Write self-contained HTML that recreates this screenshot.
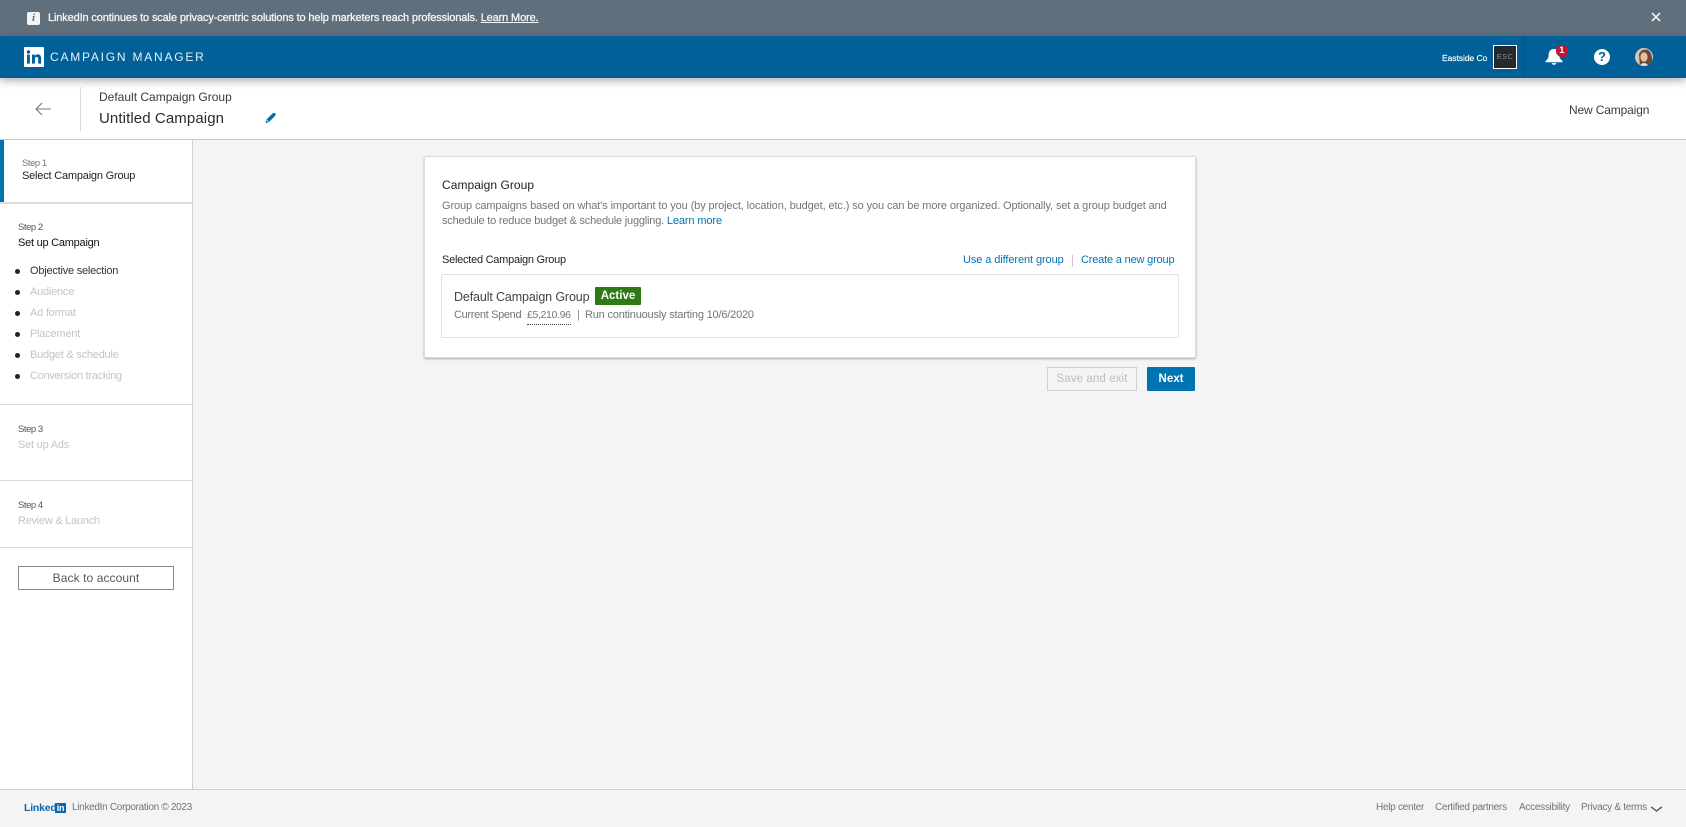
<!DOCTYPE html>
<html><head><meta charset="utf-8"><title>Campaign Manager</title>
<style>
*{box-sizing:border-box}
html,body{margin:0;padding:0;width:1686px;height:827px;overflow:hidden;background:#f4f4f4;font-family:"Liberation Sans",sans-serif}
.a{position:absolute}
.t{position:absolute;white-space:nowrap;line-height:16px;height:16px}
a{color:inherit;text-decoration:none}
.g{color:#c4c4c4}
.l{color:#0073b1}
.line{position:absolute;left:0;width:192px;height:1px;background:#dcdcdc}
.b{position:absolute;left:15px;width:5px;height:5px;border-radius:50%;background:#222}
.s{font-size:11px;letter-spacing:-.22px}
.st{font-size:9.5px;letter-spacing:-.45px}
.f{font-size:10px;color:#6f7478;letter-spacing:-.28px}
</style></head><body>
<div class="a" style="left:0;top:0;width:1686px;height:36px;background:#5f6f7c"></div>
<div class="a" style="left:27px;top:12px;width:13px;height:13px;background:#f3f3f3;border-radius:2px;color:#5f6f7c;font:italic bold 11px/13px 'Liberation Serif',serif;text-align:center">i</div>
<div class="t" style="left:48px;top:10px;font-size:11px;color:#f4f6f7;letter-spacing:-.14px;-webkit-text-stroke:.3px #f4f6f7">LinkedIn continues to scale privacy-centric solutions to help marketers reach professionals. <a href="#" style="text-decoration:underline">Learn More.</a></div>
<svg class="a" style="left:1650px;top:11px" width="12" height="12" viewBox="0 0 12 12"><path d="M2 2l8 8M10 2l-8 8" stroke="#fff" stroke-width="1.500"/></svg>

<div class="a" style="left:0;top:36px;width:1686px;height:42px;background:#006097;box-shadow:0 3px 8px rgba(0,0,0,.3);z-index:2">
<svg class="a" style="left:24px;top:11px" width="20" height="20" viewBox="0 0 20 20"><rect width="20" height="20" rx="1" fill="#fff"/><rect x="3" y="7.600" width="2.900" height="9" fill="#006097"/><circle cx="4.450" cy="5" r="1.700" fill="#006097"/><path d="M8 7.600h2.800v1.300c.5-.9 1.500-1.500 2.900-1.500 2.600 0 3.400 1.600 3.400 4.100v5.100h-2.900v-4.600c0-1.200-.3-2.100-1.500-2.100s-1.800.9-1.800 2.200v4.500H8z" fill="#006097"/></svg>
<div class="t" style="left:50px;top:13px;font-size:12px;letter-spacing:1.780px;color:#e6f0f6">CAMPAIGN MANAGER</div>
<div class="t" style="left:1442px;top:14px;font-size:8.500px;letter-spacing:-.05px;color:#fff;-webkit-text-stroke:.15px #fff">Eastside Co</div>
<div class="a" style="left:1493px;top:9px;width:24px;height:24px;border:1px solid #fff;background:#25282c;color:#8a8a8a;font-size:7.500px;line-height:22px;text-align:center;letter-spacing:.4px">ESC</div>
<div class="a" style="left:1523px;top:0;width:1px;height:42px;background:#00527f"></div>
<svg class="a" style="left:1545px;top:12px" width="18" height="18" viewBox="0 0 18 18"><path d="M9 1c3.200 0 5 2.100 5.300 5l.4 4 2.800 3.300v.9H.5v-.9l2.800-3.300.4-4C4 3.100 5.800 1 9 1z" fill="#fff"/><path d="M6.600 15.100h4.800c-.2 1-1.200 1.700-2.400 1.700s-2.200-.7-2.400-1.700z" fill="#fff"/></svg>
<div class="a" style="left:1555.500px;top:8.800px;width:12.500px;height:12.500px;border-radius:50%;background:#cb112d;color:#fff;font:bold 9.500px/12.500px 'Liberation Sans',sans-serif;text-align:center">1</div>
<div class="a" style="left:1594px;top:13px;width:16px;height:16px;border-radius:50%;background:#fff;color:#006097;font:bold 13px/16px 'Liberation Sans',sans-serif;text-align:center">?</div>
<svg class="a" style="left:1635px;top:12px" width="18" height="18" viewBox="0 0 18 18"><defs><clipPath id="c"><circle cx="9" cy="9" r="9"/></clipPath></defs><g clip-path="url(#c)"><rect width="18" height="18" fill="#cfc6ba"/><path d="M5 18L4 6Q7 0 13 2q5 3 4 16z" fill="#6a4a36"/><ellipse cx="9" cy="9" rx="3.600" ry="4.800" fill="#e6bfa4"/><path d="M4 18q5-6 10 0z" fill="#efdccd"/></g></svg>
</div>

<div class="a" style="left:0;top:78px;width:1686px;height:62px;background:#fff;border-bottom:1px solid #c8c8c8;z-index:1"></div>
<div style="position:absolute;left:0;top:0;z-index:3">
<svg class="a" style="left:34px;top:101px" width="18" height="16" viewBox="0 0 18 16"><path d="M17 8H2M8 2L2 8l6 6" fill="none" stroke="#777" stroke-width="1.100"/></svg>
<div class="a" style="left:80px;top:87px;width:1px;height:44px;background:#d9d9d9"></div>
<div class="t" style="left:99px;top:89px;font-size:12px;color:#3a3a3a">Default Campaign Group</div>
<div class="t" style="left:99px;top:111px;font-size:15px;letter-spacing:.1px;color:#2b2b2b">Untitled Campaign</div>
<svg class="a" style="left:264px;top:112px" width="13" height="12" viewBox="0 0 13 12"><path d="M8.500 1.500c.8-.8 2-.9 2.700-.2s.6 1.900-.2 2.700L5 10l-3.500 1.200L2.500 7.500z" fill="#006fa6"/><path d="M2.800 8l1.700 1.700" stroke="#fff" stroke-width=".7"/></svg>
<div class="t" style="left:1569px;top:102px;font-size:12px;letter-spacing:-.15px;color:#3c3c3c">New Campaign</div>
</div>

<div class="a" style="left:0;top:139px;width:193px;height:650px;background:#fff;border-right:1px solid #cfcfcf">
<div class="a" style="left:0;top:0;width:4px;height:63px;background:#0073b1"></div>
</div>
<div class="line" style="top:202px;height:2px"></div>
<div class="t st" style="left:22px;top:156px;color:#777">Step 1</div>
<div class="t" style="left:22px;top:168px;font-size:11px;color:#222;letter-spacing:-.2px">Select Campaign Group</div>
<div class="t st" style="left:18px;top:220px;color:#555">Step 2</div>
<div class="t" style="left:18px;top:235px;font-size:11px;color:#111;letter-spacing:-.24px">Set up Campaign</div>
<div class="b" style="top:269px"></div><div class="t s" style="left:30px;top:263px;color:#333">Objective selection</div>
<div class="b" style="top:290px"></div><div class="t g s" style="left:30px;top:284px">Audience</div>
<div class="b" style="top:311px"></div><div class="t g s" style="left:30px;top:305px">Ad format</div>
<div class="b" style="top:332px"></div><div class="t g s" style="left:30px;top:326px">Placement</div>
<div class="b" style="top:353px"></div><div class="t g s" style="left:30px;top:347px">Budget &amp; schedule</div>
<div class="b" style="top:374px"></div><div class="t g s" style="left:30px;top:368px;letter-spacing:-.28px">Conversion tracking</div>
<div class="line" style="top:404px"></div>
<div class="t st" style="left:18px;top:422px;color:#555">Step 3</div>
<div class="t g s" style="left:18px;top:437px">Set up Ads</div>
<div class="line" style="top:480px"></div>
<div class="t st" style="left:18px;top:498px;color:#555">Step 4</div>
<div class="t g s" style="left:18px;top:513px;letter-spacing:-.25px">Review &amp; Launch</div>
<div class="line" style="top:547px"></div>
<div class="a" style="left:18px;top:566px;width:156px;height:24px;border:1px solid #8a8a8a;text-align:center;font-size:12px;line-height:22px;color:#5a5a5a;letter-spacing:.09px">Back to account</div>

<div class="a" style="left:424px;top:156px;width:772px;height:202px;background:#fff;border:1px solid #dcdcdc;border-radius:2px;box-shadow:0 1px 2px rgba(0,0,0,.3)"></div>
<div class="t" style="left:442px;top:177px;font-size:12px;color:#222;letter-spacing:.05px">Campaign Group</div>
<div class="t" style="left:442px;top:198px;font-size:11px;color:#70767b;letter-spacing:-.11px">Group campaigns based on what's important to you (by project, location, budget, etc.) so you can be more organized. Optionally, set a group budget and</div>
<div class="t" style="left:442px;top:213px;font-size:11px;color:#70767b;letter-spacing:-.2px">schedule to reduce budget &amp; schedule juggling. <a href="#" class="l" style="letter-spacing:-.11px">Learn more</a></div>
<div class="t" style="left:442px;top:252px;font-size:11px;color:#222;letter-spacing:-.25px">Selected Campaign Group</div>
<a href="#" class="t l" style="left:963px;top:252px;font-size:11px;letter-spacing:-.09px">Use a different group</a>
<div class="a" style="left:1072px;top:255px;width:1px;height:12px;background:#d8bfd8"></div>
<a href="#" class="t l" style="left:1081px;top:252px;font-size:11px;letter-spacing:-.18px">Create a new group</a>
<div class="a" style="left:441px;top:274px;width:738px;height:64px;border:1px solid #e2e2e2;border-radius:2px"></div>
<div class="t" style="left:454px;top:289px;font-size:12.500px;color:#444;letter-spacing:-.13px">Default Campaign Group</div>
<div class="a" style="left:595px;top:287px;width:46px;height:18px;background:#2f7a16;color:#fff;font-size:11.500px;font-weight:bold;line-height:19px;text-align:center;border-radius:1px">Active</div>
<div class="t" style="left:454px;top:307px;font-size:11px;color:#70767b;letter-spacing:-.33px">Current Spend</div>
<div class="t" style="left:527px;top:306px;font-size:10.500px;line-height:18px;height:19px;color:#70767b;letter-spacing:-.35px;border-bottom:1px dotted #444">£5,210.96</div>
<div class="t" style="left:577px;top:307px;font-size:11px;color:#7a8a96">|</div>
<div class="t" style="left:585px;top:307px;font-size:11px;color:#70767b;letter-spacing:-.19px">Run continuously starting 10/6/2020</div>
<div class="a" style="left:1047px;top:367px;width:90px;height:24px;border:1px solid #cfcfcf;color:#bdbdbd;font-size:11.500px;line-height:22px;text-align:center;letter-spacing:.1px">Save and exit</div>
<div class="a" style="left:1147px;top:367px;width:48px;height:24px;background:#0073b1;color:#fff;font-size:11.500px;font-weight:bold;line-height:24px;text-align:center;border-radius:1px">Next</div>

<div class="a" style="left:0;top:789px;width:1686px;height:38px;background:#f4f4f4;border-top:1px solid #cfcfcf"></div>
<div class="t" style="left:24px;top:800px;font-size:10.500px;font-weight:bold;color:#0b66b0;letter-spacing:-.2px">Linked</div>
<div class="a" style="left:55px;top:803px;width:11px;height:10px;background:#0b66b0;color:#fff;font:bold 9px/10px 'Liberation Sans',sans-serif;text-align:center;letter-spacing:-.3px">in</div>
<div class="t f" style="left:72px;top:800px;letter-spacing:-.3px">LinkedIn Corporation © 2023</div>
<a href="#" class="t f" style="left:1376px;top:800px">Help center</a>
<a href="#" class="t f" style="left:1435px;top:800px">Certified partners</a>
<a href="#" class="t f" style="left:1519px;top:800px">Accessibility</a>
<a href="#" class="t f" style="left:1581px;top:800px">Privacy &amp; terms</a>
<svg class="a" style="left:1650px;top:806px" width="13" height="7" viewBox="0 0 13 7"><path d="M1 .8L6.500 5 12 .8" fill="none" stroke="#555" stroke-width="1.300"/></svg>
</body></html>
